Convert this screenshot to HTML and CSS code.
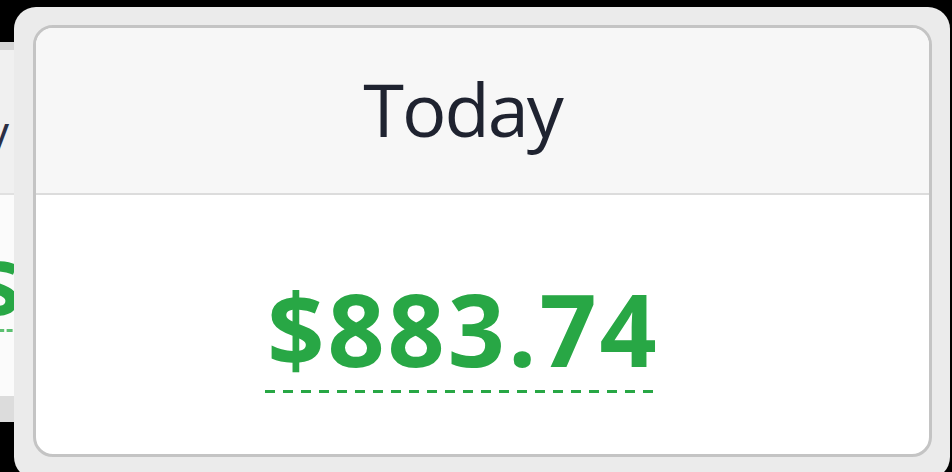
FILE: index.html
```html
<!DOCTYPE html>
<html lang="en">
<head>
<meta charset="utf-8">
<title>Today</title>
<link rel="stylesheet" href="styles.css">
</head>
<body>
<div class="screen">
  <div class="peek">
    <div class="peek-card">
      <div class="peek-head"><span class="peek-title">y</span></div>
      <div class="peek-body"><span class="peek-amount">$</span></div>
      <div class="peek-foot"></div>
    </div>
  </div>
  <div class="frame">
    <div class="card">
      <div class="card-header">
        <h2 class="card-title">Today</h2>
      </div>
      <div class="card-body">
        <span class="amount">$883.74</span>
      </div>
    </div>
  </div>
</div>
</body>
</html>
```

FILE: styles.css
```css
html, body {
  margin: 0;
  padding: 0;
  background: #000;
  overflow: hidden;
}

.screen {
  display: flex;
  width: 952px;
  height: 472px;
  overflow: hidden;
}

/* partially visible neighbouring card on the left */
.peek {
  width: 14px;
  flex: none;
  padding-top: 42px;
  overflow: hidden;
}

.peek-card {
  width: 14px;
  height: 380px;
  box-sizing: border-box;
  display: flex;
  flex-direction: column;
  background: #fff;
  border-top: 8px solid #d6d6d6;
  overflow: hidden;
}

.peek-head {
  height: 143px;
  flex: none;
  background: #f0f0f0;
  border-bottom: 2px solid #e0e0e0;
  overflow: hidden;
}

.peek-title {
  display: block;
  margin: 58px 0 0 -14px;
  font-family: "Open Sans", "Noto Sans", sans-serif;
  font-size: 46px;
  line-height: 1;
  color: #2a2f45;
}

.peek-body {
  flex: 1;
  overflow: hidden;
  background: #fbfbfb;
}

.peek-amount {
  display: inline-block;
  margin: 50px 0 0 -27px;
  font-family: "Open Sans", "Noto Sans", sans-serif;
  font-weight: 700;
  font-size: 84px;
  line-height: 84px;
  color: #28a745;
  border-bottom: 3px dashed #5cc071;
}

.peek-foot {
  height: 26px;
  flex: none;
  background: #dcdcdc;
}

/* main card */
.frame {
  width: 936px;
  height: 472px;
  flex: none;
  margin-top: 7px;
  box-sizing: border-box;
  padding: 18px 18px 17px 19px;
  background: #ebebeb;
  border-radius: 22px;
}

.card {
  height: 432px;
  box-sizing: border-box;
  display: flex;
  flex-direction: column;
  border: 3px solid #c4c4c4;
  border-radius: 20px;
  overflow: hidden;
  background: #fff;
}

.card-header {
  height: 165px;
  flex: none;
  padding-right: 40px;
  display: flex;
  align-items: center;
  justify-content: center;
  background: #f7f7f7;
  border-bottom: 2px solid #dcdcdc;
}

.card-title {
  margin: 0;
  padding-bottom: 4px;
  font-family: "Open Sans", "Noto Sans", sans-serif;
  font-weight: 400;
  font-size: 74px;
  letter-spacing: -2px;
  line-height: 1;
  color: #1f2330;
}

.card-body {
  flex: 1;
  display: flex;
  align-items: center;
  justify-content: center;
  padding-top: 22px;
  padding-right: 38px;
}

.amount {
  position: relative;
  display: inline-block;
  font-family: "Open Sans", "Noto Sans", sans-serif;
  font-weight: 700;
  font-size: 100px;
  letter-spacing: 3px;
  line-height: 1;
  padding-bottom: 15px;
  color: #28a745;
}

.amount::after {
  content: "";
  position: absolute;
  left: -2px;
  right: 0;
  bottom: 0;
  height: 3px;
  background: repeating-linear-gradient(90deg, #28a745 0 10px, transparent 10px 18px);
}
```
